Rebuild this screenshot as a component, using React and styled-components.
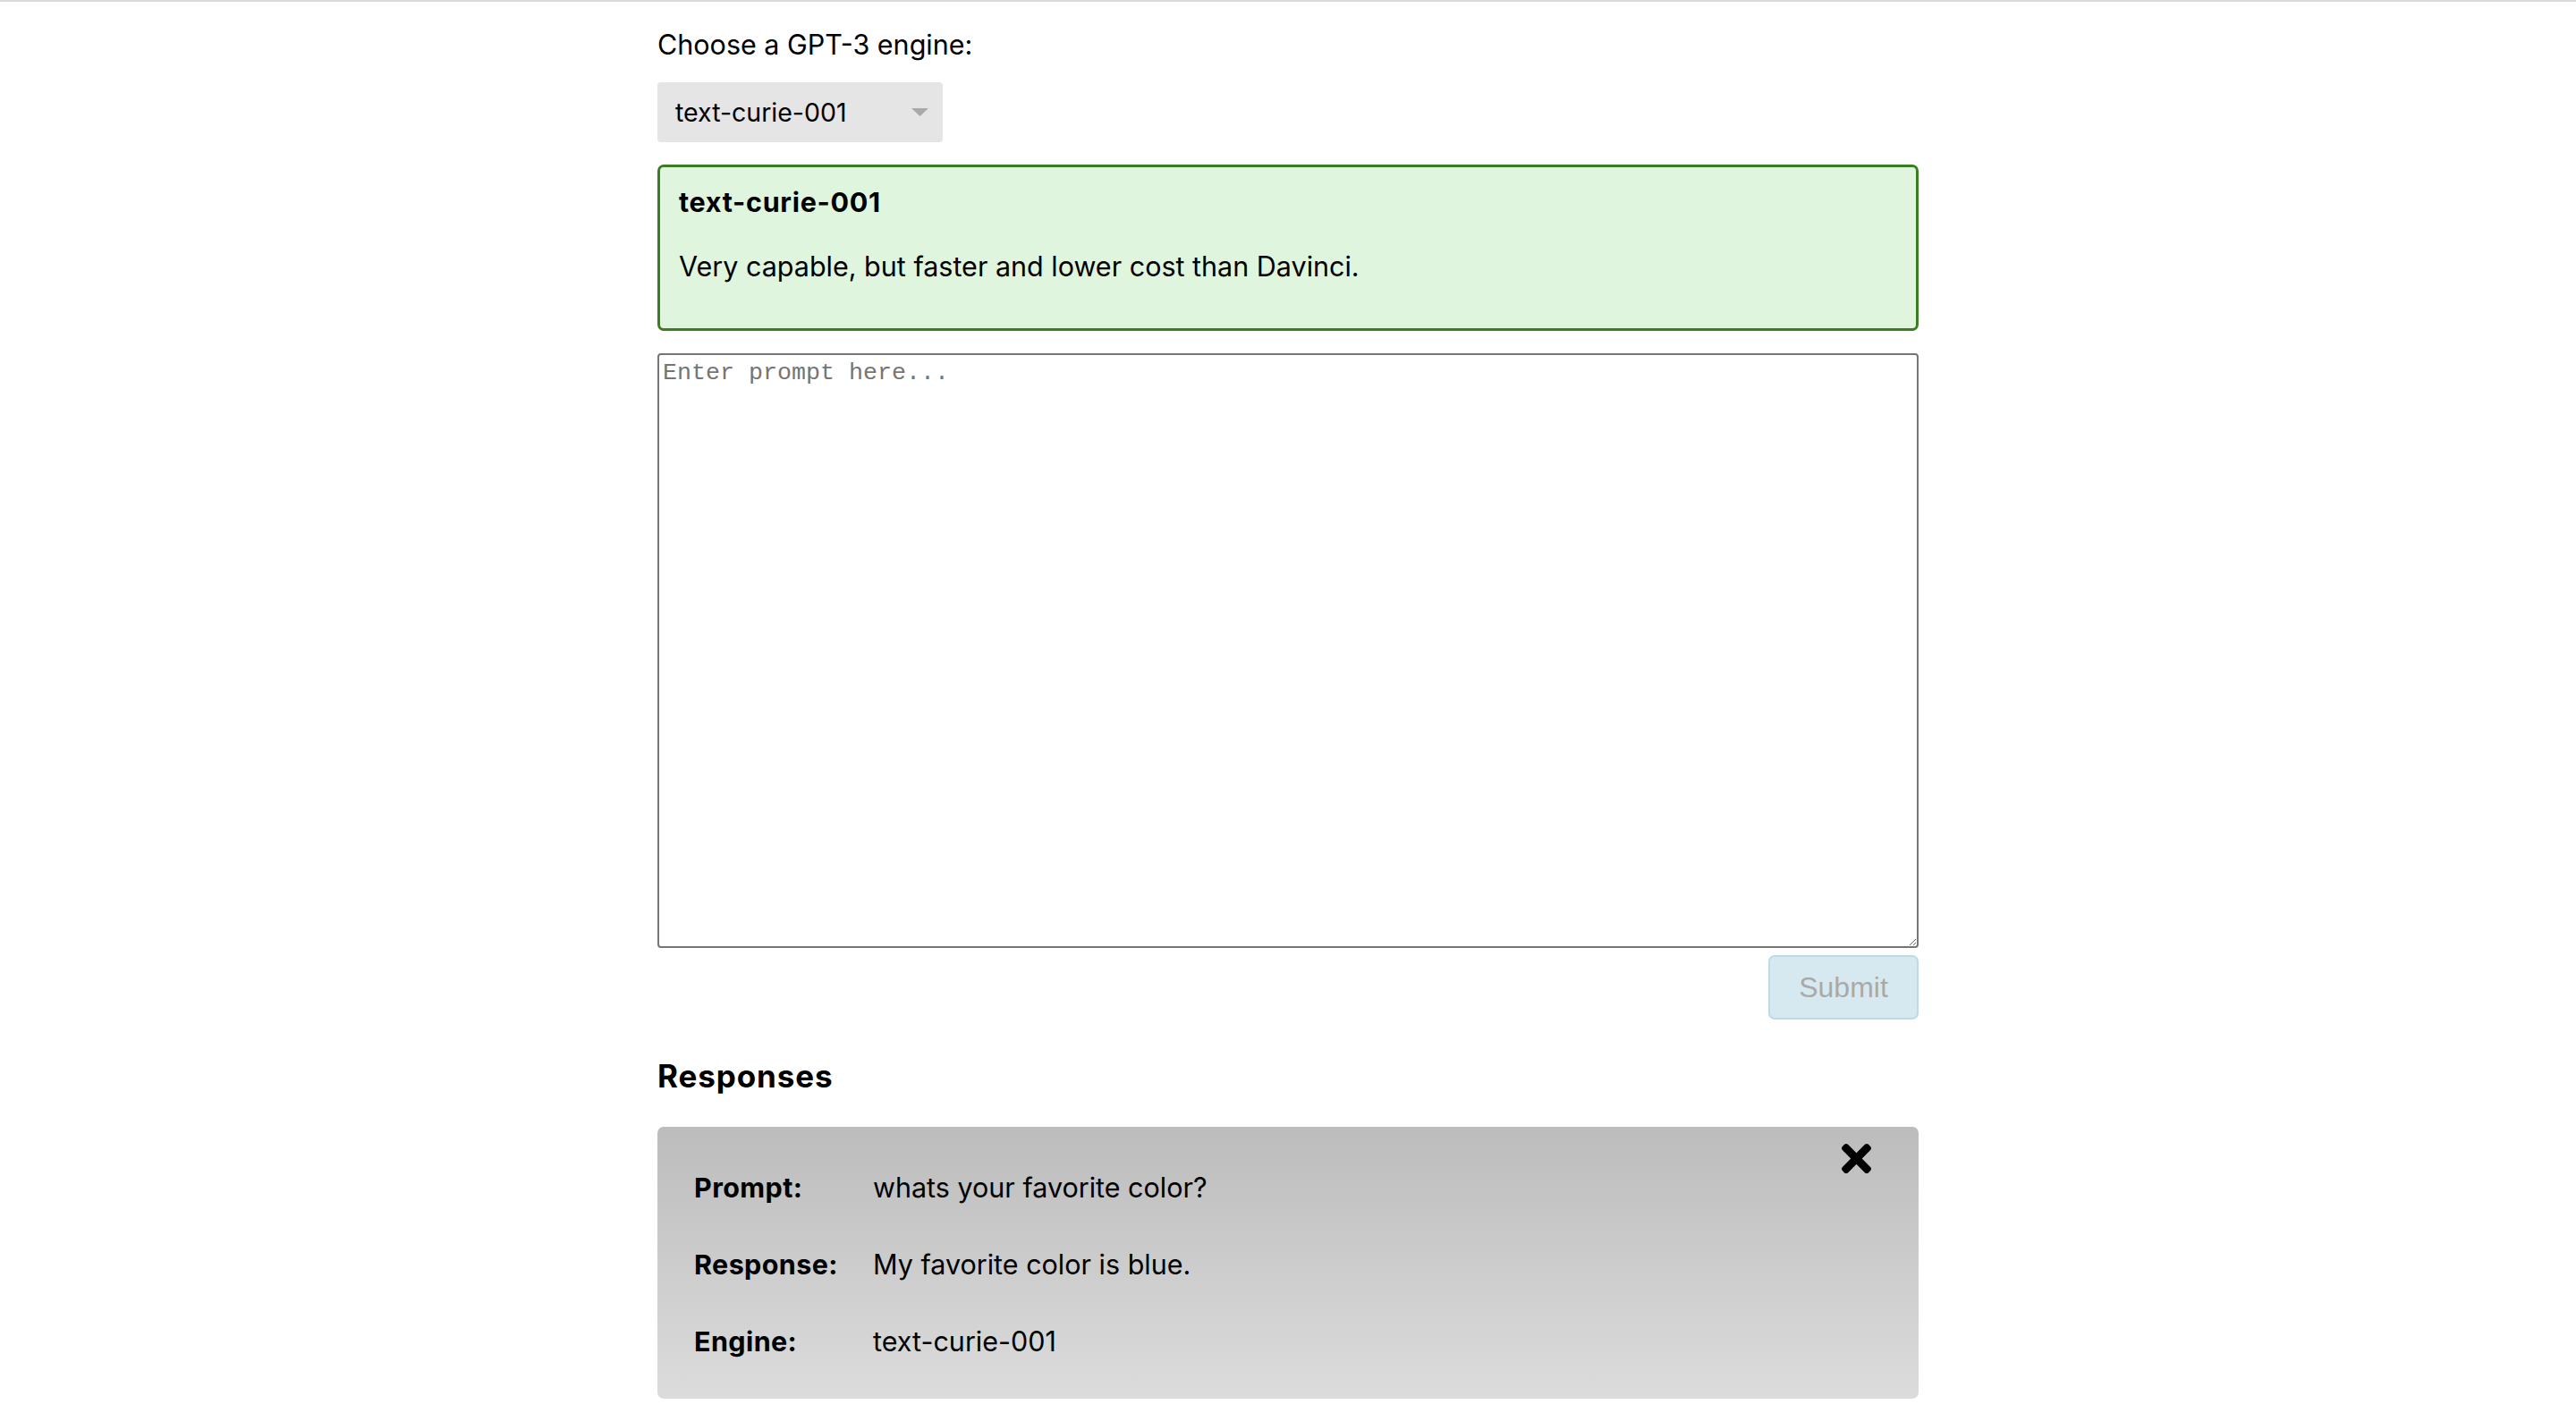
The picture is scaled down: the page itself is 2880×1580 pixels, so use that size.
import React from "react";
import styled, { createGlobalStyle } from "styled-components";

const GlobalStyle = createGlobalStyle`
  html, body { margin: 0; padding: 0; background: #ffffff; }
  body {
    font-family: Inter, "Noto Sans", "Liberation Sans", sans-serif;
    color: #000000;
  }
  * { box-sizing: border-box; }
`;

const TopRule = styled.div`
  height: 2px;
  background: #d9d9d9;
`;

const Page = styled.main`
  width: 1410px;
  margin: 0 auto;
  padding-top: 30px;
  display: flex;
  flex-direction: column;
`;

const FieldLabel = styled.label`
  font-size: 30.5px;
  line-height: 36px;
`;

const SelectBox = styled.div`
  margin-top: 24px;
  width: 319px;
  height: 67px;
  background: #e5e5e5;
  border-radius: 4px;
  display: flex;
  align-items: center;
  justify-content: space-between;
  padding: 0 16px 0 20px;
  font-size: 28.5px;
`;

const Caret = styled.svg`
  width: 19px;
  height: 9px;
  fill: #a9a9a9;
`;

const InfoBox = styled.section`
  margin-top: 25px;
  border: 3px solid #3b7d23;
  border-radius: 7px;
  background: #e0f5dd;
  padding: 21px 21px 51px;
`;

const InfoTitle = styled.h3`
  margin: 0 0 36px;
  font-size: 30.5px;
  line-height: 36px;
  font-weight: 700;
  letter-spacing: 0.7px;
`;

const InfoText = styled.p`
  margin: 0;
  font-size: 30.5px;
  line-height: 36px;
`;

const Prompt = styled.textarea`
  margin-top: 25px;
  width: 100%;
  height: 665px;
  border: 2px solid #767676;
  border-radius: 4px;
  padding: 5px 4px 4px;
  font-family: "Liberation Mono", "Courier New", monospace;
  font-size: 26.67px;
  display: block;
  &::placeholder { color: #757575; }
`;

const Actions = styled.div`
  margin-top: 8px;
  display: flex;
  justify-content: flex-end;
`;

const SubmitButton = styled.button`
  width: 168px;
  height: 72px;
  border: 2px solid #bcdbe7;
  border-radius: 7px;
  background: #d6e9f1;
  color: #a9a9a9;
  font-family: "Liberation Sans", Arial, sans-serif;
  font-size: 32px;
  padding: 0;
`;

const SectionTitle = styled.h2`
  margin: 43px 0 0;
  font-size: 35px;
  line-height: 40px;
  font-weight: 700;
  letter-spacing: 0.9px;
`;

const ResponseCard = styled.article`
  position: relative;
  margin-top: 37px;
  border-radius: 7px;
  background: linear-gradient(#bcbcbc, #dcdcdc);
  padding: 50px 40px 46px 41px;
  display: grid;
  grid-template-columns: 200px 1fr;
  row-gap: 50px;
  font-size: 30.5px;
  line-height: 36px;
`;

const RowLabel = styled.span`
  font-weight: 700;
  letter-spacing: 0.4px;
`;

const RowValue = styled.span``;

const CloseButton = styled.button`
  position: absolute;
  top: 19px;
  right: 53px;
  width: 33px;
  height: 33px;
  padding: 0;
  border: none;
  background: none;
  display: flex;
  cursor: pointer;
`;

const CloseIcon = () => (
  <svg width="33" height="33" viewBox="0 80 352 352" fill="#000">
    <path d="M242.72 256l100.07-100.07c12.28-12.28 12.28-32.19 0-44.48l-22.24-22.24c-12.28-12.28-32.19-12.28-44.48 0L176 189.28 75.93 89.21c-12.28-12.28-32.19-12.28-44.48 0L9.21 111.45c-12.28 12.28-12.28 32.19 0 44.48L109.28 256 9.21 356.07c-12.28 12.28-12.28 32.19 0 44.48l22.24 22.24c12.28 12.28 32.2 12.28 44.48 0L176 322.72l100.07 100.07c12.28 12.28 32.2 12.28 44.48 0l22.24-22.24c12.28-12.28 12.28-32.19 0-44.48L242.72 256z" />
  </svg>
);

const responses = [
  { prompt: "whats your favorite color?", response: "My favorite color is blue.", engine: "text-curie-001" },
];

export default function App() {
  return (
    <>
      <GlobalStyle />
      <TopRule />
      <Page>
        <FieldLabel>Choose a GPT-3 engine:</FieldLabel>
        <SelectBox>
          <span>text-curie-001</span>
          <Caret viewBox="0 0 19 9"><polygon points="0,0 19,0 9.5,9" /></Caret>
        </SelectBox>
        <InfoBox>
          <InfoTitle>text-curie-001</InfoTitle>
          <InfoText>Very capable, but faster and lower cost than Davinci.</InfoText>
        </InfoBox>
        <Prompt placeholder="Enter prompt here..." />
        <Actions>
          <SubmitButton disabled>Submit</SubmitButton>
        </Actions>
        <SectionTitle>Responses</SectionTitle>
        {responses.map((r, i) => (
          <ResponseCard key={i}>
            <CloseButton aria-label="Remove"><CloseIcon /></CloseButton>
            <RowLabel>Prompt:</RowLabel>
            <RowValue>{r.prompt}</RowValue>
            <RowLabel>Response:</RowLabel>
            <RowValue>{r.response}</RowValue>
            <RowLabel>Engine:</RowLabel>
            <RowValue>{r.engine}</RowValue>
          </ResponseCard>
        ))}
      </Page>
    </>
  );
}
